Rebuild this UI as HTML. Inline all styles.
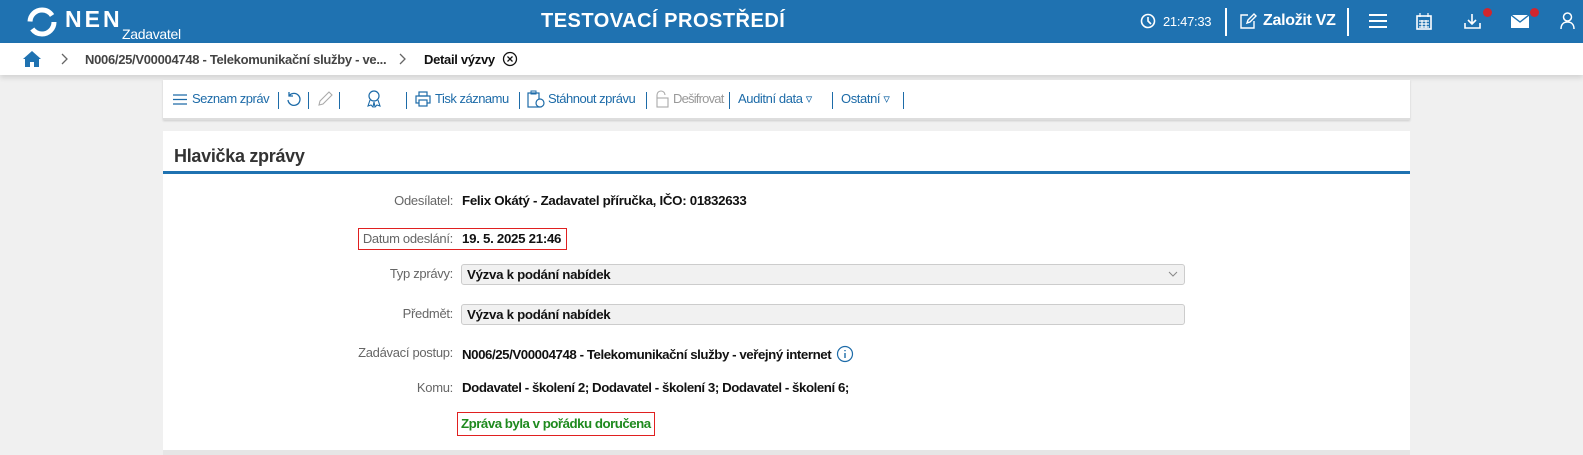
<!DOCTYPE html>
<html><head><meta charset="utf-8">
<style>
*{box-sizing:border-box;margin:0;padding:0}
body{width:1583px;height:455px;overflow:hidden;background:#f0f0f0;font-family:"Liberation Sans",sans-serif;position:relative;letter-spacing:-0.3px}
.top{position:absolute;left:0;top:0;width:1583px;height:43px;background:#1f72b1;color:#fff}
.abs{position:absolute}
.bc{position:absolute;left:0;top:43px;width:1583px;height:32px;background:#fff;box-shadow:0 3px 5px rgba(0,0,0,.12);font-size:13px;font-weight:bold;color:#444}
.card{position:absolute;left:163px;background:#fff;width:1247px}
.tb{font-size:13px;color:#1d6ba8;letter-spacing:-0.5px}
.tb div{white-space:nowrap}
.sep{position:absolute;top:12px;width:1px;height:17px;background:#1d6ba8}
.lbl{position:absolute;right:1130px;font-size:13px;color:#666;text-align:right;white-space:nowrap}
.val{position:absolute;left:462px;font-size:13.3px;font-weight:bold;color:#111;white-space:nowrap;letter-spacing:-0.3px}
.inp{position:absolute;left:461px;width:724px;height:21px;background:#f1f1f1;border:1px solid #ccc;border-radius:3px}
</style></head><body>
<div class="top">
 <svg class="abs" style="left:26px;top:7px" width="32" height="30" viewBox="0 0 32 30"><circle cx="16" cy="15" r="12" fill="none" stroke="#fff" stroke-width="5" stroke-dasharray="30 8"/></svg>
 <div class="abs" style="left:65px;top:6px;font-size:23px;font-weight:bold;letter-spacing:3px">NEN</div>
 <div class="abs" style="left:122px;top:26px;font-size:14px">Zadavatel</div>
 <div class="abs" style="left:541px;top:10px;font-size:20px;font-weight:bold;letter-spacing:0.5px">TESTOVACÍ PROSTŘEDÍ</div>
 <svg class="abs" style="left:1140px;top:13px" width="16" height="16"><circle cx="8" cy="8" r="6.5" fill="none" stroke="#fff" stroke-width="1.6"/><path d="M8 4v4l3 3" stroke="#fff" stroke-width="1.6" fill="none"/></svg>
 <div class="abs" style="left:1163px;top:14px;font-size:13px">21:47:33</div>
 <div class="abs" style="left:1225px;top:8px;width:2px;height:28px;background:#fff"></div>
 <svg class="abs" style="left:1239px;top:12px" width="18" height="18"><path d="M9 3H2v13h13V9M8 11l1-3 6-6 2 2-6 6z" stroke="#fff" stroke-width="1.4" fill="none"/></svg>
 <div class="abs" style="left:1263px;top:12px;font-size:16px;font-weight:bold">Založit VZ</div>
 <div class="abs" style="left:1347px;top:8px;width:2px;height:28px;background:#fff"></div>
 <svg class="abs" style="left:1369px;top:14px" width="18" height="14"><path d="M0 1h18M0 7h18M0 13h18" stroke="#fff" stroke-width="2"/></svg>
 <svg class="abs" style="left:1416px;top:13px" width="16" height="17"><rect x="1" y="3" width="14" height="13" fill="none" stroke="#fff" stroke-width="1.6"/><path d="M4 0v4M12 0v4M3 8h10M3 11h10M3 14h10M6 7v8M10 7v8" stroke="#fff" stroke-width="1.2"/></svg>
 <svg class="abs" style="left:1464px;top:14px" width="17" height="15"><path d="M8 0v9M4 6l4 4 4-4M1 9v5h15V9" stroke="#fff" stroke-width="1.6" fill="none"/></svg>
 <div class="abs" style="left:1483px;top:8px;width:9px;height:9px;border-radius:50%;background:#d0262d"></div>
 <svg class="abs" style="left:1511px;top:15px" width="18" height="13"><rect x="0" y="0" width="18" height="13" fill="#fff"/><path d="M0 0l9 7 9-7" stroke="#1f72b1" stroke-width="1.4" fill="none"/></svg>
 <div class="abs" style="left:1530px;top:8px;width:9px;height:9px;border-radius:50%;background:#d0262d"></div>
 <svg class="abs" style="left:1560px;top:12px" width="15" height="18"><circle cx="7.5" cy="5" r="4" fill="none" stroke="#fff" stroke-width="1.5"/><path d="M1 17c0-5 3-7 6.5-7s6.5 2 6.5 7" stroke="#fff" stroke-width="1.5" fill="none"/></svg>
</div>
<div class="bc">
 <svg class="abs" style="left:23px;top:8px" width="18" height="16"><path d="M9 0L0 8h2v8h5v-5h4v5h5V8h2z" fill="#1f72b1"/></svg>
 <svg class="abs" style="left:61px;top:10px" width="8" height="12"><path d="M1 1l5 5-5 5" stroke="#666" stroke-width="1.3" fill="none"/></svg>
 <div class="abs" style="left:85px;top:9px">N006/25/V00004748 - Telekomunikační služby - ve...</div>
 <svg class="abs" style="left:399px;top:10px" width="8" height="12"><path d="M1 1l5 5-5 5" stroke="#666" stroke-width="1.3" fill="none"/></svg>
 <div class="abs" style="left:424px;top:9px;color:#111">Detail výzvy</div>
 <svg class="abs" style="left:502px;top:8px" width="16" height="16"><circle cx="8" cy="8" r="6.5" fill="none" stroke="#111" stroke-width="1.3"/><path d="M5.5 5.5l5 5M10.5 5.5l-5 5" stroke="#111" stroke-width="1.3"/></svg>
</div>
<div class="card tb" style="top:80px;height:40px;box-shadow:0 1px 2px rgba(0,0,0,.15);border-bottom:2px solid #ddd">
 <svg class="abs" style="left:10px;top:14px" width="14" height="11"><path d="M0 1h14M0 5.5h14M0 10h14" stroke="#1d6ba8" stroke-width="1.3"/></svg>
 <div class="abs" style="left:29px;top:11px">Seznam zpráv</div>
 <div class="sep" style="left:115px"></div>
 <svg class="abs" style="left:123px;top:11px" width="16" height="16"><path d="M3 5a6 6 0 1 1-1 4M3 1v4h4" stroke="#1d6ba8" stroke-width="1.3" fill="none"/></svg>
 <div class="sep" style="left:145px"></div>
 <svg class="abs" style="left:154px;top:11px" width="16" height="16"><path d="M2 14l1-4 9-9 3 3-9 9z" stroke="#aaa" stroke-width="1.1" fill="none"/></svg>
 <div class="sep" style="left:176px"></div>
 <svg class="abs" style="left:204px;top:10px" width="14" height="18"><circle cx="7" cy="6" r="5" fill="none" stroke="#1d6ba8" stroke-width="1.2"/><path d="M3 10l-2 6 3-1 2 2 1-5M11 10l2 6-3-1-2 2-1-5" stroke="#1d6ba8" stroke-width="1.1" fill="none"/></svg>
 <div class="sep" style="left:243px"></div>
 <svg class="abs" style="left:252px;top:11px" width="16" height="16"><rect x="4" y="1" width="8" height="4" fill="none" stroke="#1d6ba8" stroke-width="1.2"/><rect x="1" y="5" width="14" height="7" fill="none" stroke="#1d6ba8" stroke-width="1.2"/><rect x="4" y="9" width="8" height="6" fill="#fff" stroke="#1d6ba8" stroke-width="1.2"/></svg>
 <div class="abs" style="left:272px;top:11px">Tisk záznamu</div>
 <div class="sep" style="left:356px"></div>
 <svg class="abs" style="left:364px;top:10px" width="18" height="18"><rect x="1" y="3" width="11" height="14" fill="none" stroke="#1d6ba8" stroke-width="1.2"/><circle cx="13" cy="13" r="4" fill="#fff" stroke="#1d6ba8" stroke-width="1.2"/><path d="M4 1h5v3H4z" fill="none" stroke="#1d6ba8"/></svg>
 <div class="abs" style="left:385px;top:11px">Stáhnout zprávu</div>
 <div class="sep" style="left:483px"></div>
 <svg class="abs" style="left:491px;top:10px" width="16" height="18"><path d="M3 8V5a4 4 0 0 1 8 0" stroke="#aaa" stroke-width="1.1" fill="none"/><rect x="3" y="8" width="11" height="9" fill="none" stroke="#aaa" stroke-width="1.1"/></svg>
 <div class="abs" style="left:510px;top:11px;color:#999;letter-spacing:-0.8px">Dešifrovat</div>
 <div class="sep" style="left:566px"></div>
 <div class="abs" style="left:575px;top:11px;letter-spacing:-0.4px">Auditní data ▿</div>
 <div class="sep" style="left:669px"></div>
 <div class="abs" style="left:678px;top:11px;letter-spacing:-0.4px">Ostatní ▿</div>
 <div class="sep" style="left:740px"></div>
</div>
<div class="card" style="top:131px;height:324px">
 <div class="abs" style="left:11px;top:15px;font-size:18px;font-weight:bold;color:#333">Hlavička zprávy</div>
 <div class="abs" style="left:0;top:40px;width:1247px;height:3px;background:#1f72b1"></div>
</div>
<div class="lbl" style="top:193px">Odesílatel:</div>
<div class="val" style="top:193px">Felix Okátý - Zadavatel příručka, IČO: 01832633</div>
<div class="abs" style="left:358px;top:228px;width:209px;height:22px;border:1px solid #e02020"></div>
<div class="lbl" style="top:231px">Datum odeslání:</div>
<div class="val" style="top:231px">19. 5. 2025 21:46</div>
<div class="lbl" style="top:266px">Typ zprávy:</div>
<div class="inp" style="top:264px"></div>
<div class="val" style="top:267px;left:467px">Výzva k podání nabídek</div>
<svg class="abs" style="left:1168px;top:271px" width="10" height="7"><path d="M1 1l4 4 4-4" stroke="#888" fill="none"/></svg>
<div class="lbl" style="top:306px">Předmět:</div>
<div class="inp" style="top:304px"></div>
<div class="val" style="top:307px;left:467px">Výzva k podání nabídek</div>
<div class="lbl" style="top:345px">Zadávací postup:</div>
<div class="val" style="top:345px;letter-spacing:-0.45px">N006/25/V00004748 - Telekomunikační služby - veřejný internet <svg style="vertical-align:-4px;margin-left:2px" width="18" height="18"><circle cx="9" cy="9" r="7.5" fill="none" stroke="#1d6ba8" stroke-width="1.2"/><path d="M9 8v5M9 5v1.2" stroke="#1d6ba8" stroke-width="1.4"/></svg></div>
<div class="lbl" style="top:380px">Komu:</div>
<div class="val" style="top:380px;letter-spacing:-0.45px">Dodavatel - školení 2; Dodavatel - školení 3; Dodavatel - školení 6;</div>
<div class="val" style="top:412px;left:457px;color:#1e8a1e;border:1px solid #e02020;padding:3px 3px 4px 3px;letter-spacing:-0.5px">Zpráva byla v pořádku doručena</div>
<div class="abs" style="left:163px;top:450px;width:1247px;height:5px;background:#e6e6e6"></div>
</body></html>
